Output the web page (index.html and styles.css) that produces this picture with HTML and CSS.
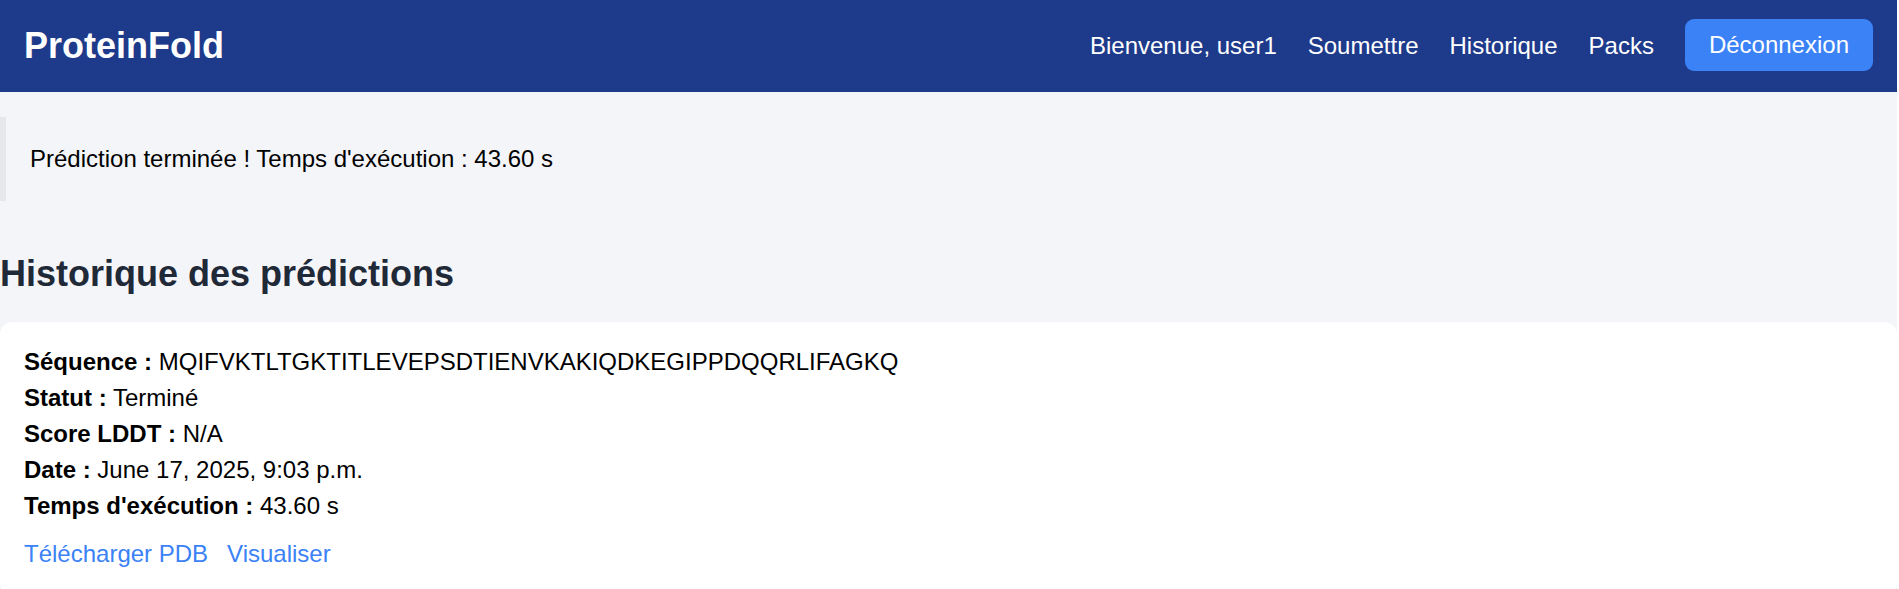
FILE: index.html
```html
<!DOCTYPE html>
<html lang="fr">
<head>
<meta charset="utf-8">
<title>ProteinFold</title>
<link rel="stylesheet" href="styles.css">
</head>
<body>
<header class="topbar">
  <div class="logo">ProteinFold</div>
  <nav class="nav">
    <span class="nav-item">Bienvenue, user1</span>
    <a class="nav-item" href="#">Soumettre</a>
    <a class="nav-item" href="#">Historique</a>
    <a class="nav-item" href="#">Packs</a>
    <button class="logout" type="button">Déconnexion</button>
  </nav>
</header>
<main class="content">
  <div class="alert">Prédiction terminée ! Temps d'exécution : 43.60 s</div>
  <h2 class="section-title">Historique des prédictions</h2>
  <div class="card">
    <div class="row"><strong>Séquence :</strong> MQIFVKTLTGKTITLEVEPSDTIENVKAKIQDKEGIPPDQQRLIFAGKQ</div>
    <div class="row"><strong>Statut :</strong> Terminé</div>
    <div class="row"><strong>Score LDDT :</strong> N/A</div>
    <div class="row"><strong>Date :</strong> June 17, 2025, 9:03 p.m.</div>
    <div class="row"><strong>Temps d'exécution :</strong> 43.60 s</div>
    <div class="actions">
      <a class="action" href="#">Télécharger PDB</a>
      <a class="action" href="#">Visualiser</a>
    </div>
  </div>
</main>
</body>
</html>
```

FILE: styles.css
```css
html {
  background: #ffffff;
}
body {
  margin: 0 2px 0 0;
  background: #f4f5f9;
  font-family: "Liberation Sans", Arial, sans-serif;
  font-size: 24px;
  line-height: 36px;
  color: #000000;
  min-height: 589px;
}
.topbar {
  height: 92px;
  box-sizing: border-box;
  padding: 0 24px;
  background: #1e3a8a;
  display: flex;
  align-items: center;
  justify-content: space-between;
  color: #ffffff;
}
.logo {
  font-size: 36px;
  font-weight: bold;
  line-height: normal;
}
.nav {
  display: flex;
  align-items: center;
  gap: 31px;
  line-height: normal;
}
.nav-item {
  color: #ffffff;
  text-decoration: none;
}
.logout {
  font-family: inherit;
  font-size: 24px;
  line-height: normal;
  color: #ffffff;
  background: #3b82f6;
  border: none;
  border-radius: 9px;
  padding: 12px 24px;
  margin-top: -2px;
}
.alert {
  margin-top: 25px;
  border-left: 6px solid #e5e7eb;
  padding: 24px;
}
.section-title {
  margin: 46px 0 21px;
  font-size: 36px;
  line-height: 54px;
  color: #1f2937;
}
.card {
  background: #ffffff;
  border-radius: 12px;
  padding: 22px 24px 24px;
  box-shadow: 0 1px 3px rgba(0, 0, 0, 0.05);
}
.row strong {
  font-weight: bold;
}
.actions {
  margin-top: 12px;
  display: flex;
  gap: 19px;
}
.action {
  color: #3b82f6;
  text-decoration: none;
}
```
